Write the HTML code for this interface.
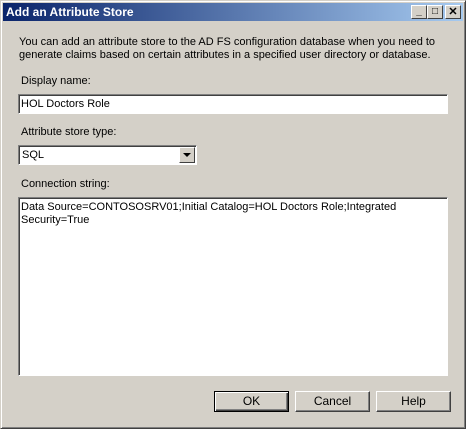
<!DOCTYPE html><html><head><style>
*{margin:0;padding:0;box-sizing:border-box}
body{width:466px;height:429px;background:#d4d0c8;font-family:"Liberation Sans",sans-serif;font-size:11px;color:#000;position:relative;overflow:hidden}
.win{position:absolute;left:0;top:0;width:466px;height:429px;border:1px solid;border-color:#d4d0c8 #404040 #404040 #d4d0c8;box-shadow:inset 1px 1px #fff,inset -1px -1px #808080}
.title{position:absolute;left:3px;top:3px;width:460px;height:18px;background:linear-gradient(to right,#0a246a,#a6caf0);color:#fff;font-weight:bold;font-size:12px;line-height:18px;padding-left:3px}
.tb{position:absolute;top:5px;width:16px;height:14px;background:#d4d0c8;border:1px solid;border-color:#fff #404040 #404040 #fff;font-size:10px;line-height:12px;text-align:center;color:#000;font-weight:bold}
.t{position:absolute;white-space:nowrap}
.sunk{position:absolute;background:#fff;border:1px solid;border-color:#808080 #fff #fff #808080;box-shadow:inset 1px 1px #404040}
.btn{position:absolute;top:391px;width:75px;height:21px;border:1px solid;border-color:#fff #404040 #404040 #fff;box-shadow:inset -1px -1px #808080;text-align:center;line-height:19px;font-size:12px}
</style></head><body>
<div class="win"></div>
<div class="title">Add an Attribute Store</div>
<div class="tb" style="left:411px">_</div>
<div class="tb" style="left:427px">□</div>
<div class="tb" style="left:445px;font-size:11px">✕</div>
<div class="t" style="left:19px;top:36px;line-height:13px;font-size:11px">You can add an attribute store to the AD FS configuration database when you need to<br>generate claims based on certain attributes in a specified user directory or database.</div>
<div class="t" style="left:21px;top:75px">Display name:</div>
<div class="sunk" style="left:18px;top:94px;width:430px;height:20px"><span class="t" style="left:2px;top:3px">HOL Doctors Role</span></div>
<div class="t" style="left:21px;top:126px">Attribute store type:</div>
<div class="sunk" style="left:18px;top:145px;width:179px;height:20px"><span class="t" style="left:3px;top:3px">SQL</span>
<div style="position:absolute;right:1px;top:1px;width:16px;height:16px;background:#d4d0c8;border:1px solid;border-color:#fff #404040 #404040 #fff"><div style="position:absolute;left:3px;top:5px;border-left:4px solid transparent;border-right:4px solid transparent;border-top:4px solid #000"></div></div></div>
<div class="t" style="left:21px;top:178px">Connection string:</div>
<div class="sunk" style="left:18px;top:197px;width:430px;height:179px"><span class="t" style="left:2px;top:3px;line-height:13px">Data Source=CONTOSOSRV01;Initial Catalog=HOL Doctors Role;Integrated<br>Security=True</span></div>
<div class="btn" style="left:214px;border-color:#000;box-shadow:inset 1px 1px #fff,inset -1px -1px #404040,inset -2px -2px #808080">OK</div>
<div class="btn" style="left:295px">Cancel</div>
<div class="btn" style="left:376px">Help</div>
</body></html>
